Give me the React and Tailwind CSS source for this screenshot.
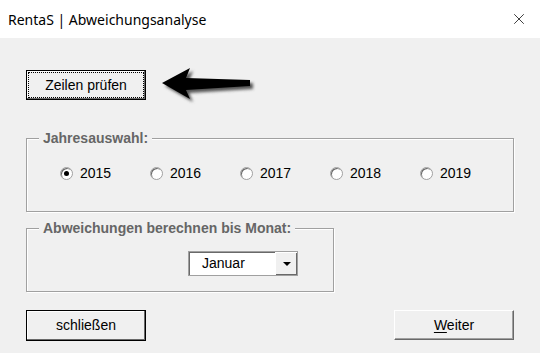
import { X } from "lucide-react";

const years = ["2015", "2016", "2017", "2018", "2019"];

function Radio({ label, checked }) {
  return (
    <label className="flex items-center w-[90px] gap-[7px]">
      <span className="w-[13px] h-[13px] rounded-full bg-white border border-[#a0a0a0] shadow-[inset_1px_1px_0_#696969] flex items-center justify-center">
        {checked && <span className="w-[5px] h-[5px] rounded-full bg-black" />}
      </span>
      <span className="text-[14px] text-black leading-4">{label}</span>
    </label>
  );
}

function Arrow() {
  return (
    <svg width="96" height="40" viewBox="0 0 96 40" className="ml-[14px] mt-[-4px] shrink-0">
      <defs>
        <filter id="blur" x="-20%" y="-40%" width="140%" height="180%">
          <feGaussianBlur stdDeviation="1.6" />
        </filter>
      </defs>
      <path d="M3 18 L31 3 L27 13 L91 15 L91 21 L27 25 L31 34 Z" fill="#555" filter="url(#blur)" transform="translate(2 2)" />
      <path d="M2 17 L30 2 L26 12 L90 14 L90 20 L26 24 L30 33 Z" fill="#000" />
    </svg>
  );
}

export default function App() {
  return (
    <div
      className="w-[540px] h-[353px] bg-[#f0f0f0] overflow-hidden text-black"
      style={{ fontFamily: "'Liberation Sans', Arial, sans-serif" }}
    >
      {/* Title bar */}
      <div className="h-[38px] bg-white flex items-center justify-between pl-[8px] pr-[12px]">
        <span className="text-[14px] text-black" style={{ fontFamily: "'Noto Sans', sans-serif" }}>
          RentaS | Abweichungsanalyse
        </span>
        <X size={18} strokeWidth={1} className="text-black" />
      </div>

      <div className="px-[26px] pt-[32px]">
        {/* Zeilen prüfen + arrow */}
        <div className="flex items-start h-[30px]">
          <button className="w-[120px] h-[30px] border border-black bg-[#f0f0f0] p-[1px] shadow-[inset_-1px_-1px_0_#696969,inset_1px_1px_0_#fff]">
            <span className="w-full h-full flex items-center justify-center border border-dotted border-black text-[14px]">
              Zeilen prüfen
            </span>
          </button>
          <Arrow />
        </div>

        {/* Jahresauswahl */}
        <fieldset className="mt-[30px] w-[488px] h-[82px] border border-[#a0a0a0] shadow-[1px_1px_0_#fff,inset_1px_1px_0_#fff]">
          <legend className="ml-[12px] px-[4px] text-[14px] font-bold text-[#666] leading-4 bg-[#f0f0f0]">
            Jahresauswahl:
          </legend>
          <div className="flex pl-[33px] pt-[19px]">
            {years.map((y) => (
              <Radio key={y} label={y} checked={y === "2015"} />
            ))}
          </div>
        </fieldset>

        {/* Monat */}
        <fieldset className="mt-[8px] w-[308px] h-[72px] border border-[#a0a0a0] shadow-[1px_1px_0_#fff,inset_1px_1px_0_#fff]">
          <legend className="ml-[12px] px-[4px] text-[14px] font-bold text-[#666] leading-4 bg-[#f0f0f0] whitespace-nowrap">
            Abweichungen berechnen bis Monat:
          </legend>
          <div className="pl-[161px] pt-[15px]">
            <div className="w-[110px] h-[25px] bg-white flex border border-[#a0a0a0] shadow-[inset_1px_1px_0_#696969]">
              <span className="flex-1 pl-[13px] text-[14px] leading-[23px]">Januar</span>
              <span className="w-[22px] h-[23px] bg-[#f0f0f0] flex items-center justify-center border-l border-t border-[#fff] shadow-[inset_-1px_-1px_0_#696969]">
                <svg width="8" height="5" viewBox="0 0 8 5">
                  <path d="M0 0 H8 L4 4 Z" fill="#000" />
                </svg>
              </span>
            </div>
          </div>
        </fieldset>

        {/* Bottom buttons */}
        <div className="mt-[18px] flex justify-between w-[488px]">
          <button className="w-[120px] h-[31px] border border-black bg-[#f0f0f0] text-[14px] shadow-[inset_-1px_-1px_0_#696969,inset_1px_1px_0_#fff]">
            schließen
          </button>
          <button className="w-[120px] h-[30px] bg-[#f0f0f0] text-[14px] border-t border-l border-white border-r border-b border-r-[#696969] border-b-[#696969] shadow-[inset_-1px_-1px_0_#a0a0a0]">
            <span className="underline underline-offset-2">W</span>eiter
          </button>
        </div>
      </div>
    </div>
  );
}
